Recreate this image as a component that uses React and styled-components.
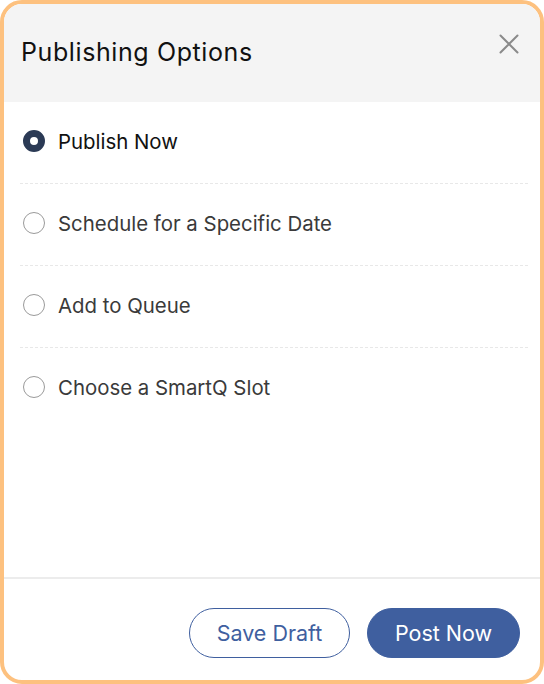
import React, { useState } from 'react';
import styled, { createGlobalStyle } from 'styled-components';

const GlobalStyle = createGlobalStyle`
  html, body { margin: 0; padding: 0; background: #fff; }
  * { box-sizing: border-box; }
  body { font-family: Inter, "Noto Sans", sans-serif; }
`

const Card = styled.div`
  width: 544px;
  height: 684px;
  border: 4px solid #fdc17f;
  border-radius: 22px;
  overflow: hidden;
  display: flex;
  flex-direction: column;
  background: #fff;
`

const Header = styled.div`
  height: 98px;
  flex-shrink: 0;
  background: #f4f4f4;
  display: flex;
  align-items: flex-start;
  justify-content: space-between;
  padding: 28px 19px 0 17px;
`

const Title = styled.h1`
  margin: 8px 0 0;
  font-size: 25px;
  line-height: 1;
  font-weight: 400;
  color: #111;
  letter-spacing: 0.6px;
`

const CloseButton = styled.button`
  border: none;
  background: none;
  padding: 0;
  width: 24px;
  height: 24px;
  cursor: pointer;
  display: flex;
  align-items: center;
  justify-content: center;
`

const OptionList = styled.div`
  flex: 1;
  padding: 0 12px 0 16px;
`

const OptionRow = styled.label`
  height: 82px;
  display: flex;
  align-items: center;
  gap: 13px;
  padding: 0 0 3px 3px;
  border-bottom: 1px dashed ${({ last }) => (last ? 'transparent' : '#e8e8e8')};
  cursor: pointer;
`

const Radio = styled.span`
  width: 22px;
  height: 22px;
  border-radius: 50%;
  flex-shrink: 0;
  border: ${({ checked }) => (checked ? '7px solid #2b3a55' : '1.5px solid #9a9a9a')};
  background: #fff;
`

const OptionText = styled.span`
  font-size: 20.4px;
  color: ${({ checked }) => (checked ? '#111' : '#3a3a3a')};
`

const Footer = styled.div`
  height: 103px;
  flex-shrink: 0;
  border-top: 2px solid #ececec;
  display: flex;
  justify-content: flex-end;
  align-items: flex-start;
  gap: 17px;
  padding: 29px 20px 0 0;
`

const Button = styled.button`
  height: 50px;
  width: ${({ w }) => w}px;
  border-radius: 25px;
  font-family: Inter, "Noto Sans", sans-serif;
  font-size: 21.5px;
  cursor: pointer;
  border: 1.5px solid #3f5f9f;
  background: ${({ primary }) => (primary ? '#3f5f9f' : '#fff')};
  color: ${({ primary }) => (primary ? '#fff' : '#3f5f9f')};
`

const options = [
  'Publish Now',
  'Schedule for a Specific Date',
  'Add to Queue',
  'Choose a SmartQ Slot',
];

export default function App() {
  const [selected, setSelected] = useState(0);

  return (
    <>
      <GlobalStyle />
      <Card>
        <Header>
          <Title>Publishing Options</Title>
          <CloseButton aria-label="close">
            <svg width="20" height="20" viewBox="0 0 20 20">
              <path d="M1.5 1.5 L18.5 18.5 M18.5 1.5 L1.5 18.5" stroke="#8a8a8a" strokeWidth="2" strokeLinecap="round" />
            </svg>
          </CloseButton>
        </Header>
        <OptionList>
          {options.map((o, i) => (
            <OptionRow key={o} last={i === options.length - 1} onClick={() => setSelected(i)}>
              <Radio checked={selected === i} />
              <OptionText checked={selected === i}>{o}</OptionText>
            </OptionRow>
          ))}
        </OptionList>
        <Footer>
          <Button w={161}>Save Draft</Button>
          <Button w={153} primary>Post Now</Button>
        </Footer>
      </Card>
    </>
  );
}
